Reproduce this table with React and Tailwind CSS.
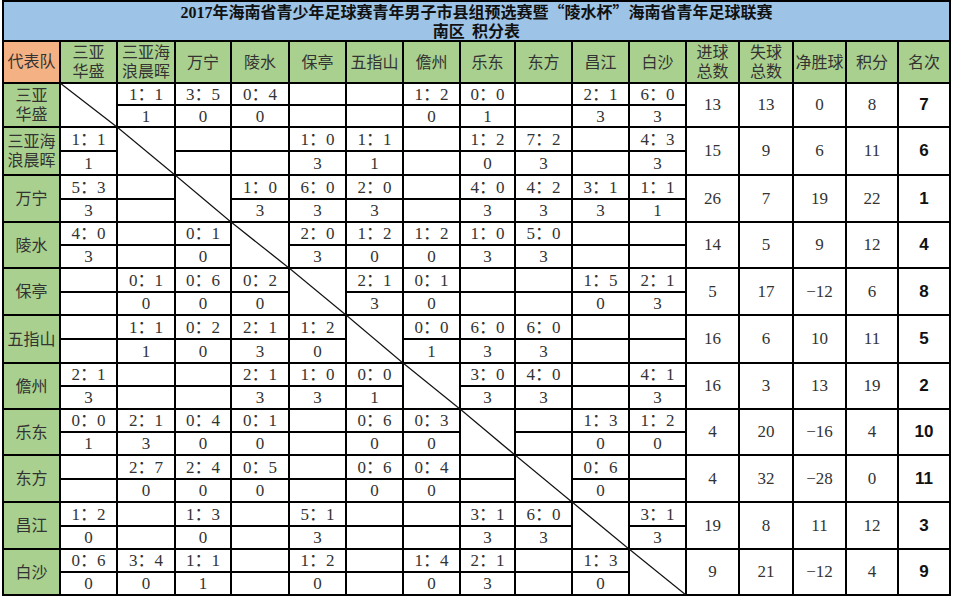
import React from "react";

const headers = [
  "三亚\n华盛",
  "三亚海\n浪晨晖",
  "万宁",
  "陵水",
  "保亭",
  "五指山",
  "儋州",
  "乐东",
  "东方",
  "昌江",
  "白沙",
  "进球\n总数",
  "失球\n总数",
  "净胜球",
  "积分",
  "名次",
];

const rows = [
  { name: "三亚\n华盛", m: ["X", "1:1/1", "3:5/0", "0:4/0", "", "", "1:2/0", "0:0/1", "", "2:1/3", "6:0/3"], s: ["13", "13", "0", "8", "7"] },
  { name: "三亚海\n浪晨晖", m: ["1:1/1", "X", "", "", "1:0/3", "1:1/1", "", "1:2/0", "7:2/3", "", "4:3/3"], s: ["15", "9", "6", "11", "6"] },
  { name: "万宁", m: ["5:3/3", "", "X", "1:0/3", "6:0/3", "2:0/3", "", "4:0/3", "4:2/3", "3:1/3", "1:1/1"], s: ["26", "7", "19", "22", "1"] },
  { name: "陵水", m: ["4:0/3", "", "0:1/0", "X", "2:0/3", "1:2/0", "1:2/0", "1:0/3", "5:0/3", "", ""], s: ["14", "5", "9", "12", "4"] },
  { name: "保亭", m: ["", "0:1/0", "0:6/0", "0:2/0", "X", "2:1/3", "0:1/0", "", "", "1:5/0", "2:1/3"], s: ["5", "17", "−12", "6", "8"] },
  { name: "五指山", m: ["", "1:1/1", "0:2/0", "2:1/3", "1:2/0", "X", "0:0/1", "6:0/3", "6:0/3", "", ""], s: ["16", "6", "10", "11", "5"] },
  { name: "儋州", m: ["2:1/3", "", "", "2:1/3", "1:0/3", "0:0/1", "X", "3:0/3", "4:0/3", "", "4:1/3"], s: ["16", "3", "13", "19", "2"] },
  { name: "乐东", m: ["0:0/1", "2:1/3", "0:4/0", "0:1/0", "", "0:6/0", "0:3/0", "X", "", "1:3/0", "1:2/0"], s: ["4", "20", "−16", "4", "10"] },
  { name: "东方", m: ["", "2:7/0", "2:4/0", "0:5/0", "", "0:6/0", "0:4/0", "", "X", "0:6/0", ""], s: ["4", "32", "−28", "0", "11"] },
  { name: "昌江", m: ["1:2/0", "", "1:3/0", "", "5:1/3", "", "", "3:1/3", "6:0/3", "X", "3:1/3"], s: ["19", "8", "11", "12", "3"] },
  { name: "白沙", m: ["0:6/0", "3:4/0", "1:1/1", "", "1:2/0", "", "1:4/0", "2:1/3", "", "1:3/0", "X"], s: ["9", "21", "−12", "4", "9"] },
];

function Diag() {
  return (
    <div className="row-span-2 bg-white relative">
      <svg className="absolute -inset-px w-[calc(100%+2px)] h-[calc(100%+2px)]" preserveAspectRatio="none" viewBox="0 0 100 100">
        <line x1="0" y1="0" x2="100" y2="100" stroke="#111" strokeWidth="1.3" vectorEffect="non-scaling-stroke" />
      </svg>
    </div>
  );
}

export default function App() {
  const cells = [];
  rows.forEach((r, ri) => {
    const bottoms = [];
    cells.push(
      <div
        key={`n${ri}`}
        className="row-span-2 bg-[#a9d08e] flex items-center justify-center text-center whitespace-pre-line text-[16px] leading-[19px] text-[#333]"
      >
        {r.name}
      </div>
    );
    r.m.forEach((c, ci) => {
      if (c === "X") {
        cells.push(<Diag key={`d${ri}-${ci}`} />);
        return;
      }
      let score = "";
      let pts = "";
      if (c) {
        const [sc, p] = c.split("/");
        const [a, b] = sc.split(":");
        score = `${a}：${b}`;
        pts = p;
      }
      cells.push(
        <div key={`t${ri}-${ci}`} className="bg-white flex items-center justify-center text-[17px] leading-none text-[#333]">
          {score}
        </div>
      );
      bottoms.push(
        <div key={`b${ri}-${ci}`} className="bg-white flex items-center justify-center text-[17px] leading-none text-[#333]">
          {pts}
        </div>
      );
    });
    r.s.forEach((v, si) => {
      cells.push(
        <div
          key={`s${ri}-${si}`}
          className={
            si === 4
              ? "row-span-2 bg-white flex items-center justify-center text-[17px] font-bold text-[#111] [font-family:'Liberation_Sans',sans-serif]"
              : "row-span-2 bg-white flex items-center justify-center text-[17px] text-[#333]"
          }
        >
          {v}
        </div>
      );
    });
    cells.push(...bottoms);
  });

  return (
    <div className="w-[954px] h-[603px] bg-white [font-family:'Liberation_Serif','Noto_Sans_CJK_SC',serif]">
      <div className="ml-[2px] inline-grid bg-black p-[2px] gap-[2px] grid-cols-[55px_55px_56px_54px_56px_55px_55px_55px_53px_55px_55px_55px_51px_52px_51px_50px_50px] grid-rows-[38px_40px_20px_20px_22px_22px_22px_21px_21px_21px_22px_21px_22px_22px_21px_21px_21px_21px_22px_21px_22px_21px_21px_21px]">
        <div className="col-span-full bg-[#9dc3e6] flex flex-col items-center justify-center text-[16px] leading-[19px] font-bold text-[#111]">
          <div className="h-[19px]">
            2017<span className="[font-family:'Noto_Sans_CJK_SC',sans-serif]">年海南省青少年足球赛青年男子市县组预选赛暨“陵水杯”海南省青年足球联赛</span>
          </div>
          <div className="h-[19px] [font-family:'Noto_Sans_CJK_SC',sans-serif]">南区&nbsp;&nbsp;积分表</div>
        </div>
        <div className="bg-[#f4b183] flex items-center justify-center text-[16px] text-[#333]">代表队</div>
        {headers.map((h, i) => (
          <div
            key={`h${i}`}
            className="bg-[#a9d08e] flex items-center justify-center text-center whitespace-pre-line text-[16px] leading-[19px] text-[#333]"
          >
            {h}
          </div>
        ))}
        {cells}
      </div>
    </div>
  );
}
